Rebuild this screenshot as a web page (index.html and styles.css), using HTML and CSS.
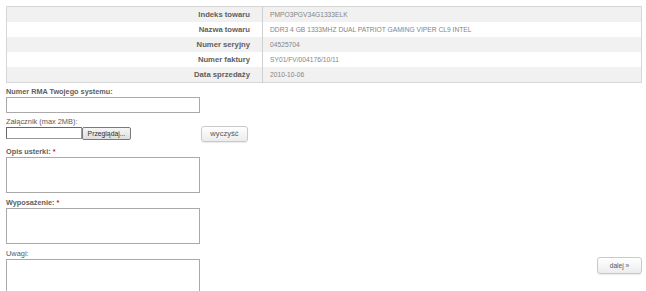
FILE: index.html
```html
<!DOCTYPE html>
<html lang="pl">
<head>
<meta charset="utf-8">
<title>RMA</title>
<link rel="stylesheet" href="styles.css">
</head>
<body>
<div class="page">
  <table class="info">
    <tr class="odd"><th>Indeks towaru</th><td>PMPO3PGV34G1333ELK</td></tr>
    <tr><th>Nazwa towaru</th><td>DDR3 4 GB 1333MHZ DUAL PATRIOT GAMING VIPER CL9 INTEL</td></tr>
    <tr class="odd"><th>Numer seryjny</th><td>04525704</td></tr>
    <tr><th>Numer faktury</th><td>SY01/FV/004176/10/11</td></tr>
    <tr class="odd"><th>Data sprzedaży</th><td>2010-10-06</td></tr>
  </table>

  <form class="form">
    <div class="group tight">
      <label class="lbl bold">Numer RMA Twojego systemu:</label>
      <input class="text" type="text">
    </div>

    <div class="group">
      <label class="lbl">Załącznik (max 2MB):</label>
      <div class="file-row">
        <div class="file">
          <span class="file-box"></span>
          <span class="browse">Przeglądaj...</span>
        </div>
        <button type="button" class="btn clear">wyczyść</button>
      </div>
    </div>

    <div class="group">
      <label class="lbl bold">Opis usterki: <span class="req">*</span></label>
      <textarea class="area"></textarea>
    </div>

    <div class="group">
      <label class="lbl bold">Wyposażenie: <span class="req">*</span></label>
      <textarea class="area"></textarea>
    </div>

    <div class="last-row">
      <div class="group">
        <label class="lbl">Uwagi:</label>
        <textarea class="area"></textarea>
      </div>
      <button type="button" class="btn next">dalej »</button>
    </div>
  </form>
</div>
</body>
</html>
```

FILE: styles.css
```css
html, body {
  margin: 0;
  padding: 0;
  background: #fff;
  overflow: hidden;
}

body {
  font-family: "Liberation Sans", Arial, sans-serif;
  color: #666;
}

.page {
  width: 636px;
  padding: 6px 0 0 6px;
}

.info {
  width: 636px;
  border-collapse: collapse;
  border: 1px solid #d6d6d6;
}

.info tr {
  height: 15px;
  background: #fff;
}

.info tr.odd {
  background: #f1f1f1;
}

.info th {
  width: 243px;
  padding: 0 12px 0 0;
  text-align: right;
  font-weight: bold;
  font-size: 7.7px;
  color: #606060;
  border-right: 1px solid #d0d0d0;
  line-height: 15px;
}

.info td {
  padding: 0 0 0 7px;
  font-size: 6.7px;
  color: #858585;
  line-height: 15px;
}

.form {
  margin-top: 4px;
}

.group {
  display: flex;
  flex-direction: column;
  align-items: flex-start;
  margin-bottom: 5px;
}

.group.tight {
  margin-bottom: 4px;
}

.lbl {
  display: block;
  height: 10px;
  line-height: 10px;
  font-size: 7.4px;
  color: #5a5a5a;
}

.lbl.bold {
  font-weight: bold;
  font-size: 7.3px;
  color: #606060;
}

.req {
  color: #d42020;
}

.text {
  box-sizing: border-box;
  width: 194px;
  height: 16px;
  margin: 0;
  padding: 0;
  border: 1px solid #aaa;
  background: #fff;
}

.area {
  box-sizing: border-box;
  width: 194px;
  height: 36px;
  margin: 0;
  padding: 0;
  border: 1px solid #aaa;
  background: #fff;
  resize: none;
  display: block;
}

.file-row {
  display: flex;
  align-items: flex-start;
  height: 15px;
}

.file {
  width: 195px;
  display: flex;
  align-items: flex-start;
}

.file-box {
  box-sizing: border-box;
  width: 76px;
  height: 12px;
  border: 1px solid #999;
  border-top-color: #666;
  border-left-color: #666;
  background: #fff;
}

.browse {
  box-sizing: border-box;
  width: 49px;
  height: 13px;
  border: 1px solid #7a7a7a;
  border-radius: 2px;
  background: linear-gradient(#f6f6f6, #dedede);
  font-size: 6.8px;
  line-height: 11px;
  text-align: center;
  color: #2e2e2e;
}

.btn {
  box-sizing: border-box;
  margin: 0;
  padding: 0;
  border: 1px solid #c9c9c9;
  border-radius: 3px;
  background: linear-gradient(#ffffff, #ececec);
  box-shadow: 0 1px 1px rgba(0,0,0,0.08);
  font-family: "Liberation Sans", Arial, sans-serif;
  color: #555;
  text-align: center;
}

.clear {
  width: 47px;
  height: 16px;
  margin-top: -1px;
  font-size: 7.6px;
  line-height: 14px;
}

.last-row {
  display: flex;
  justify-content: space-between;
  align-items: flex-start;
}

.next {
  width: 45px;
  height: 17px;
  margin-top: 8px;
  font-size: 6.6px;
  line-height: 15px;
}
```
